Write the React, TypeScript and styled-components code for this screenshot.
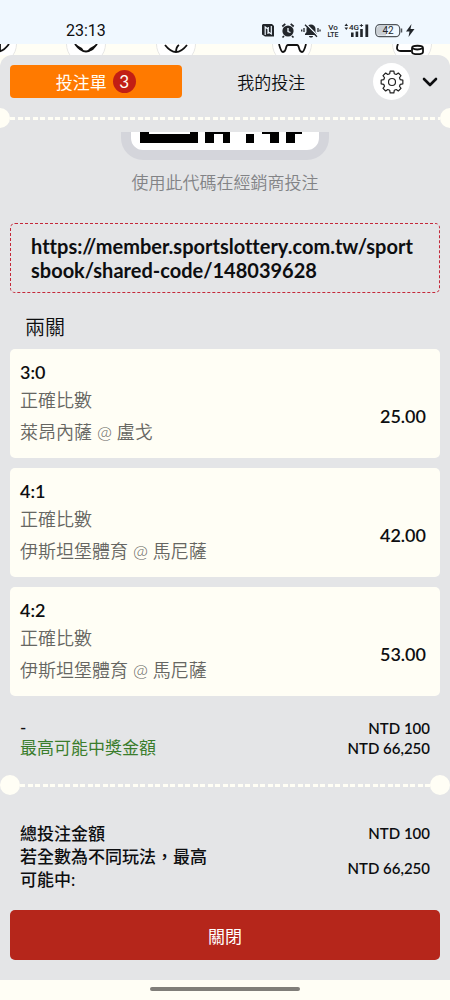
import React from 'react';
import styled, { createGlobalStyle } from 'styled-components';

const ivory = '#fffef5';
const ink = '#0d0e10';

const GlobalStyle = createGlobalStyle`
  *, *::before, *::after { box-sizing: border-box; }
  body {
    margin: 0;
    background: ${ivory};
    color: ${ink};
    font-family: Lato, "Noto Sans CJK TC", sans-serif;
    font-size: 17px;
    font-variant-ligatures: none;
  }
  button { font: inherit; color: inherit; border: 0; padding: 0; background: none; cursor: pointer; }
  h2, p, dl, dd, dt, ul { margin: 0; padding: 0; }
  ul { list-style: none; }
  svg { display: block; }
`;

const Screen = styled.div`
  display: flex;
  flex-direction: column;
  min-height: 100vh;
  overflow: hidden;
`;

const StatusBar = styled.header`
  display: flex;
  align-items: flex-end;
  justify-content: space-between;
  height: 44px;
  padding: 0 34px 3px 66px;
  background: #f0f8ff;
`;

const Clock = styled.time`
  font: 400 16px/20px Roboto, sans-serif;
`;

const StatusIcons = styled.div`
  display: flex;
  align-items: center;
  height: 20px;
`;

const SportStrip = styled.nav`
  display: grid;
  grid-template-columns: 88fr 90fr 90fr 142fr 98fr;
  justify-items: center;
  height: 11px;
  margin: 0 -11px 0 -47px;
  overflow: hidden;
`;

const Sheet = styled.main`
  flex: 1;
  display: flex;
  flex-direction: column;
  border-radius: 12px 12px 0 0;
  background: #e4e5e7;
  overflow: hidden;
`;

const TabBar = styled.div`
  display: flex;
  align-items: center;
  padding: 8px 10px;
`;

const Tabs = styled.div`
  display: flex;
  flex: 1;
  gap: 4px;
  margin-right: 16px;
`;

const Tab = styled.button<{ $active?: boolean }>`
  display: flex;
  flex: 1;
  align-items: center;
  justify-content: center;
  gap: 6px;
  height: 33px;
  border-radius: 4px;
  background: ${({ $active }) => ($active ? '#ff7a00' : 'transparent')};
  color: ${({ $active }) => ($active ? '#fffdf5' : ink)};
  font-weight: ${({ $active }) => ($active ? 400 : 350)};
`;

const Count = styled.span`
  width: 23px;
  height: 23px;
  border-radius: 50%;
  background: #c21f14;
  font-size: 17px;
  line-height: 23px;
`;

const RoundButton = styled.button`
  display: grid;
  place-items: center;
  width: 37px;
  height: 37px;
  border-radius: 50%;
  background: #fff;
`;

const CollapseButton = styled.button`
  display: grid;
  place-items: center;
  width: 20px;
  height: 32px;
  margin-left: 10px;
`;

const Perforation = styled.div<{ $bleed?: boolean }>`
  display: flex;
  align-items: center;
  margin: 0 ${({ $bleed }) => ($bleed ? '-10px' : '0')};
  &::before, &::after {
    content: '';
    width: 20px;
    height: 20px;
    border-radius: 50%;
    background: ${ivory};
  }
`;

const Dashes = styled.span`
  flex: 1;
  height: 3px;
  background: repeating-linear-gradient(90deg, ${ivory} 0 5px, transparent 5px 8px, ${ivory} 8px 13px, transparent 13px 15px);
`;

const Slip = styled.div`
  display: flex;
  flex-direction: column;
  padding: 4px 10px 0;
`;

const CodeWindow = styled.div`
  display: flex;
  flex-direction: column;
  justify-content: flex-end;
  align-items: center;
  height: 28px;
  overflow: hidden;
`;

const CodeFrame = styled.div`
  display: flex;
  align-items: flex-end;
  flex: none;
  height: 60px;
  border: 10px solid #d4d5db;
  border-radius: 22px;
  background: #fff;
`;

const Caption = styled.p`
  margin-top: 11px;
  line-height: 24px;
  text-align: center;
  font-weight: 350;
  color: #828386;
`;

const ShareLink = styled.a`
  margin-top: 28px;
  padding: 10px 20px;
  border: 1px dashed #c4283a;
  border-radius: 5px;
  color: inherit;
  font-size: 20px;
  font-weight: 700;
  line-height: 24px;
  text-decoration: none;
  word-break: break-all;
`;

const GroupTitle = styled.h2`
  margin: 22px 0 10px;
  padding-left: 15px;
  font-size: 20px;
  font-weight: 350;
  line-height: 24px;
`;

const BetList = styled.ul`
  display: flex;
  flex-direction: column;
  gap: 10px;
`;

const BetCard = styled.li`
  padding: 11px 14px 10px 10px;
  border-radius: 5px;
  background: ${ivory};
  font-size: 18px;
`;

const Score = styled.p`
  font-weight: 600;
  line-height: 24px;
`;

const BetBody = styled.div`
  display: flex;
  align-items: center;
  justify-content: space-between;
`;

const Detail = styled.p`
  color: #666662;
  font-weight: 350;
  line-height: 32px;
`;

const Odds = styled.strong`
  font-weight: 600;
`;

const Totals = styled.dl<{ $line: number; $space: string }>`
  padding: ${({ $space }) => $space};
  line-height: ${({ $line }) => $line}px;
`;

const TotalRow = styled.div`
  display: flex;
  align-items: center;
  justify-content: space-between;
`;

const TotalLabel = styled.dt<{ $win?: boolean }>`
  max-width: 200px;
  color: ${({ $win }) => ($win ? '#3a7d2c' : 'inherit')};
  font-weight: ${({ $win }) => ($win ? 400 : 500)};
`;

const Amount = styled.dd`
  font-size: 15px;
  font-weight: 600;
`;

const CloseButton = styled.button`
  height: 50px;
  margin: 0 10px 20px;
  border-radius: 5px;
  background: #b5261b;
  color: #fff;
`;

const HomeArea = styled.footer`
  display: flex;
  justify-content: center;
  height: 20px;
  padding-top: 7px;
  &::before {
    content: '';
    width: 150px;
    height: 4px;
    border-radius: 2px;
    background: #807e79;
  }
`;

const bets = [
  { score: '3:0', match: '萊昂內薩 @ 盧戈', odds: '25.00' },
  { score: '4:1', match: '伊斯坦堡體育 @ 馬尼薩', odds: '42.00' },
  { score: '4:2', match: '伊斯坦堡體育 @ 馬尼薩', odds: '53.00' },
];

const sports = [
  { line: 'M10 20q11 15 22 0M23 28V20' },
  { line: 'M9 20q11 15 22 0', fill: 'M9 20l7 4 2 3-5-2zM24 24l7-4-4 6-7 2z' },
  { line: 'M9 21q11 14 22 0M20 28q0-5 3-7' },
  { line: 'M7 20q2 8 4 8c4 0 2-7 5-7h9c3 0 1 7 5 7q2 0 4-8' },
  { line: 'M6 20q-3 7 3 7h10M20 24c0-3 11-3 11 0v4c0 3-11 3-11 0zq5 3 11 0' },
];

const gearPath = (() => {
  const teeth = 8;
  const points: string[] = [];
  for (let i = 0; i < teeth; i += 1) {
    const mid = (i * 2 * Math.PI) / teeth;
    [[-0.27, 8.6], [-0.17, 11], [0.17, 11], [0.27, 8.6]].forEach(([offset, r]) => {
      points.push(`${(12 + r * Math.sin(mid + offset)).toFixed(2)} ${(12 - r * Math.cos(mid + offset)).toFixed(2)}`);
    });
  }
  return `M${points.join('L')}Z`;
})();

function DeviceIcons() {
  return (
    <StatusIcons>
      <svg width="155" height="20" viewBox="261 21 155 20" role="img" aria-label="NFC, 鬧鐘, 靜音, VoLTE, 4G+, 42%">
        <path d="M263 24h9l2 2v10.500h-9l-3-2V25z" fill="#22262b" />
        <path d="M265.200 35v-8l2.800 2v5M271.300 26v8l-3-2v-5" fill="none" stroke="#f0f8ff" strokeWidth="1.200" />
        <circle cx="288" cy="31" r="5.600" fill="#22262b" />
        <path d="M282.300 26.500l3-2.700M293.700 26.500l-3-2.700M284 36l-1.500 1.500M292 36l1.500 1.500" stroke="#22262b" strokeWidth="1.700" />
        <path d="M288 28v3.500l2.500 1" fill="none" stroke="#f0f8ff" strokeWidth="1.300" />
        <path d="M305 35v-1l1.500-2v-3c0-6 9-6 9 0v3l1.500 2v1zM309 36h4c0 2-4 2-4 0" fill="#22262b" />
        <path d="M306.500 24.500l12 12" stroke="#f0f8ff" strokeWidth="1.400" />
        <path d="M305 24.800l12 12M301.700 29.500v2M304 28v4M320 29.500v2M318 28v4" stroke="#22262b" strokeWidth="1.300" />
        <g fill="#22262b" fontFamily="Roboto, sans-serif" fontWeight="500">
          <text x="333" y="30" fontSize="8" textAnchor="middle">Vo</text>
          <text x="333" y="37" fontSize="7" textAnchor="middle">LTE</text>
          <text x="349" y="30" fontSize="8">4G</text>
        </g>
        <path d="M344.500 26l1.800-2.500 1.800 2.500zM344.500 27.500l1.800 2.500 1.800-2.500z" fill="#22262b" />
        <path d="M359.700 25.500h3.400M361.400 24v3" stroke="#22262b" strokeWidth="0.900" />
        <path d="M351 32.500h2.600V37H351zM355.600 31.500h2.600V37h-2.600zM360.200 29h2.600v8h-2.600zM365.400 24.500h2.800V37h-2.800z" fill="#22262b" />
        <rect x="375.700" y="24.700" width="24" height="12" rx="4" fill="#f0f8ff" stroke="#50555a" strokeWidth="1.200" />
        <path d="M379.500 26h6.500v9.400h-6.500q-2.500 0-2.500-2.500v-4.400q0-2.500 2.500-2.500z" fill="#c9ced3" />
        <path d="M401.500 28.500v4" stroke="#50555a" strokeWidth="1.500" />
        <text x="388" y="34" fontSize="10" fontFamily="Roboto, sans-serif" textAnchor="middle" fill="#22262b">42</text>
        <path d="M411.500 24l-5.500 7.500h3.500l-1 5.500 6-8h-4z" fill="#22262b" />
      </svg>
    </StatusIcons>
  );
}

function CodeImage() {
  return (
    <svg width="188" height="18" viewBox="0 0 188 18" role="img" aria-label="QR code" shapeRendering="crispEdges">
      <path d="M9 0h9v2h41V0h8v11H9zM74 0h25v11h-7V2H83v9h-9zM115 2h8v9h-8zM131 0h17v11h-9V2h-8zM155 0h16v2h-7v9h-9z" fill="#000" />
    </svg>
  );
}

export default function App() {
  return (
    <Screen lang="zh-Hant">
      <GlobalStyle />
      <StatusBar>
        <Clock>23:13</Clock>
        <DeviceIcons />
      </StatusBar>
      <SportStrip aria-hidden="true">
        {sports.map(({ line, fill }) => (
          <svg key={line} width="40" height="11" viewBox="0 20 40 11">
            <circle cx="20" cy="20" r="19.500" fill="#fff" stroke="#e6e6e4" />
            <path d={line} fill="none" stroke="#111" strokeWidth="1.800" />
            {fill && <path d={fill} fill="#111" />}
          </svg>
        ))}
      </SportStrip>
      <Sheet>
        <TabBar>
          <Tabs>
            <Tab $active>
              投注單<Count>3</Count>
            </Tab>
            <Tab>我的投注</Tab>
          </Tabs>
          <RoundButton aria-label="設定">
            <svg width="24" height="24" viewBox="0 0 24 24" fill="none" stroke="#222" strokeWidth="1.200" strokeLinejoin="round">
              <path d={gearPath} />
              <circle cx="12" cy="12" r="3.500" />
            </svg>
          </RoundButton>
          <CollapseButton aria-label="收合">
            <svg width="16" height="10" viewBox="0 0 16 10" fill="none" stroke={ink} strokeWidth="2.600" strokeLinecap="round" strokeLinejoin="round">
              <path d="M2 2l6 6 6-6" />
            </svg>
          </CollapseButton>
        </TabBar>
        <Perforation $bleed>
          <Dashes />
        </Perforation>
        <Slip>
          <CodeWindow>
            <CodeFrame>
              <CodeImage />
            </CodeFrame>
          </CodeWindow>
          <Caption>使用此代碼在經銷商投注</Caption>
          <ShareLink href="https://member.sportslottery.com.tw/sportsbook/shared-code/148039628">
            https://member.sportslottery.com.tw/sportsbook/shared-code/148039628
          </ShareLink>
          <GroupTitle>兩關</GroupTitle>
          <BetList>
            {bets.map((bet) => (
              <BetCard key={bet.score}>
                <Score>{bet.score}</Score>
                <BetBody>
                  <div>
                    <Detail>正確比數</Detail>
                    <Detail>{bet.match}</Detail>
                  </div>
                  <Odds>{bet.odds}</Odds>
                </BetBody>
              </BetCard>
            ))}
          </BetList>
        </Slip>
        <Totals $line={20} $space="22px 20px 17px">
          <TotalRow>
            <TotalLabel>-</TotalLabel>
            <Amount>NTD 100</Amount>
          </TotalRow>
          <TotalRow>
            <TotalLabel $win>最高可能中獎金額</TotalLabel>
            <Amount>NTD 66,250</Amount>
          </TotalRow>
        </Totals>
        <Perforation>
          <Dashes />
        </Perforation>
        <Totals $line={23} $space="27px 20px 19px">
          <TotalRow>
            <TotalLabel>總投注金額</TotalLabel>
            <Amount>NTD 100</Amount>
          </TotalRow>
          <TotalRow>
            <TotalLabel>若全數為不同玩法，最高可能中:</TotalLabel>
            <Amount>NTD 66,250</Amount>
          </TotalRow>
        </Totals>
        <CloseButton>關閉</CloseButton>
      </Sheet>
      <HomeArea />
    </Screen>
  );
}
